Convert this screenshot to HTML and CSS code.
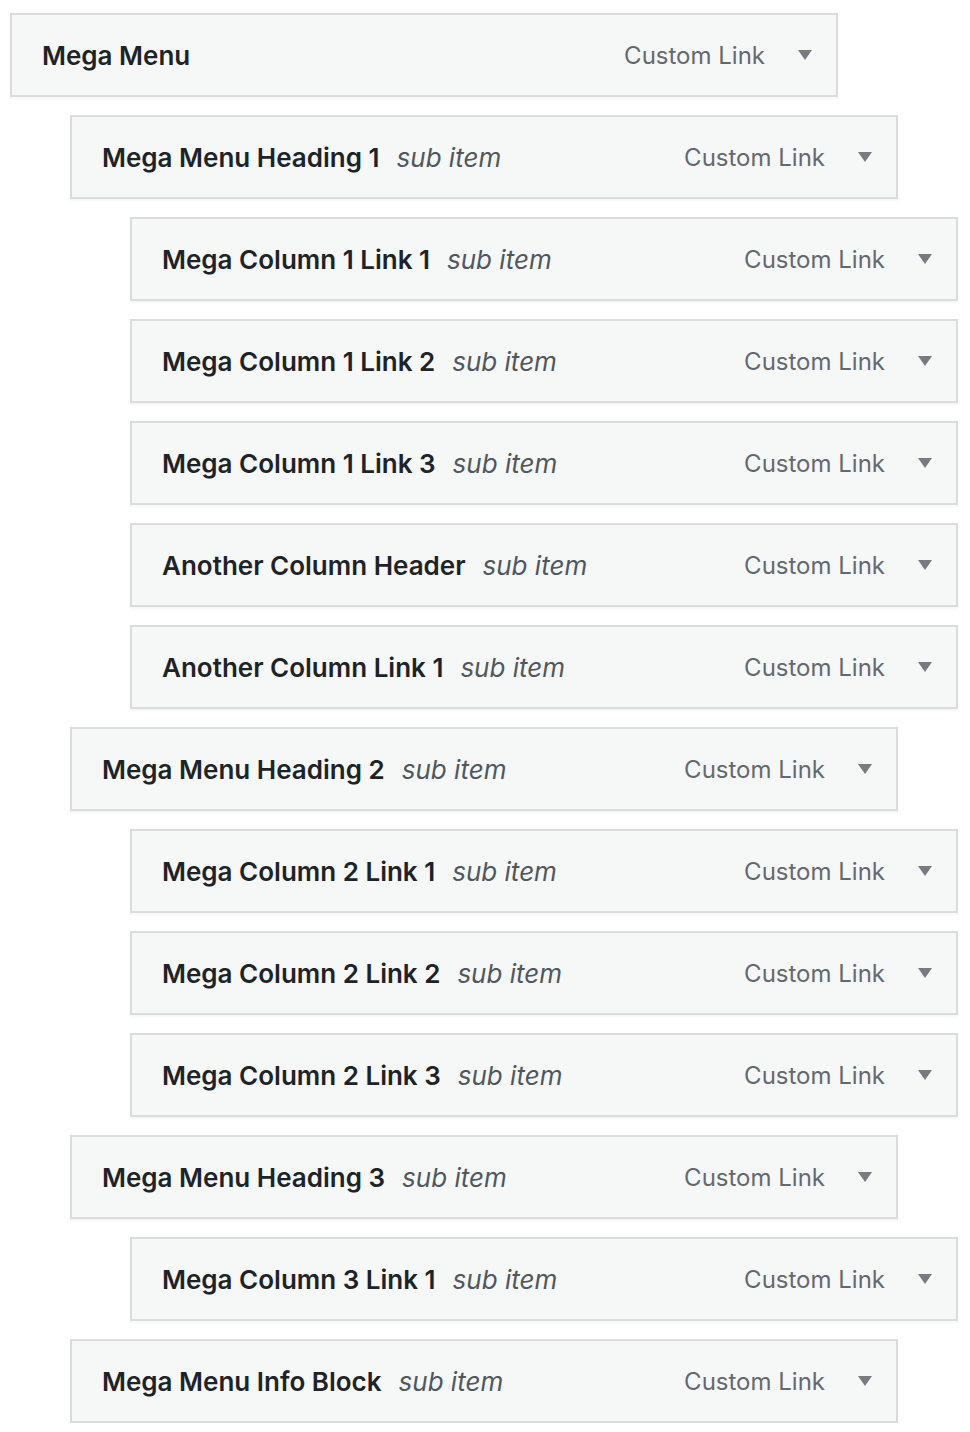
FILE: index.html
```html
<!DOCTYPE html>
<html lang="en">
<head>
<meta charset="utf-8">
<title>Menu structure</title>
<link rel="stylesheet" href="styles.css">
</head>
<body>
<ul class="menu">
  <li class="item depth-0"><div class="handle"><span class="title">Mega Menu</span><span class="controls"><span class="type">Custom Link</span><span class="toggle"></span></span></div></li>
  <li class="item depth-1"><div class="handle"><span class="title">Mega Menu Heading 1<span class="sub">sub item</span></span><span class="controls"><span class="type">Custom Link</span><span class="toggle"></span></span></div></li>
  <li class="item depth-2"><div class="handle"><span class="title">Mega Column 1 Link 1<span class="sub">sub item</span></span><span class="controls"><span class="type">Custom Link</span><span class="toggle"></span></span></div></li>
  <li class="item depth-2"><div class="handle"><span class="title">Mega Column 1 Link 2<span class="sub">sub item</span></span><span class="controls"><span class="type">Custom Link</span><span class="toggle"></span></span></div></li>
  <li class="item depth-2"><div class="handle"><span class="title">Mega Column 1 Link 3<span class="sub">sub item</span></span><span class="controls"><span class="type">Custom Link</span><span class="toggle"></span></span></div></li>
  <li class="item depth-2"><div class="handle"><span class="title">Another Column Header<span class="sub">sub item</span></span><span class="controls"><span class="type">Custom Link</span><span class="toggle"></span></span></div></li>
  <li class="item depth-2"><div class="handle"><span class="title">Another Column Link 1<span class="sub">sub item</span></span><span class="controls"><span class="type">Custom Link</span><span class="toggle"></span></span></div></li>
  <li class="item depth-1"><div class="handle"><span class="title">Mega Menu Heading 2<span class="sub">sub item</span></span><span class="controls"><span class="type">Custom Link</span><span class="toggle"></span></span></div></li>
  <li class="item depth-2"><div class="handle"><span class="title">Mega Column 2 Link 1<span class="sub">sub item</span></span><span class="controls"><span class="type">Custom Link</span><span class="toggle"></span></span></div></li>
  <li class="item depth-2"><div class="handle"><span class="title">Mega Column 2 Link 2<span class="sub">sub item</span></span><span class="controls"><span class="type">Custom Link</span><span class="toggle"></span></span></div></li>
  <li class="item depth-2"><div class="handle"><span class="title">Mega Column 2 Link 3<span class="sub">sub item</span></span><span class="controls"><span class="type">Custom Link</span><span class="toggle"></span></span></div></li>
  <li class="item depth-1"><div class="handle"><span class="title">Mega Menu Heading 3<span class="sub">sub item</span></span><span class="controls"><span class="type">Custom Link</span><span class="toggle"></span></span></div></li>
  <li class="item depth-2"><div class="handle"><span class="title">Mega Column 3 Link 1<span class="sub">sub item</span></span><span class="controls"><span class="type">Custom Link</span><span class="toggle"></span></span></div></li>
  <li class="item depth-1"><div class="handle"><span class="title">Mega Menu Info Block<span class="sub">sub item</span></span><span class="controls"><span class="type">Custom Link</span><span class="toggle"></span></span></div></li>
</ul>
</body>
</html>
```

FILE: styles.css
```css
html, body {
  margin: 0;
  padding: 0;
  background: #ffffff;
}

body {
  font-family: Inter, "Noto Sans", "Liberation Sans", sans-serif;
  color: #1d2327;
}

.menu {
  list-style: none;
  margin: 0;
  padding: 13px 0 0 10px;
  display: flex;
  flex-direction: column;
  gap: 18px;
}

.item {
  width: 828px;
}

.depth-1 { margin-left: 60px; }
.depth-2 { margin-left: 120px; }

.handle {
  box-sizing: border-box;
  width: 828px;
  display: flex;
  align-items: center;
  justify-content: space-between;
  padding: 21px 24px 19px 30px;
  border: 2px solid #dcdcde;
  background: #f6f7f7;
  box-shadow: 0 2px 2px rgba(0, 0, 0, 0.04);
  line-height: 40px;
}

.title {
  font-size: 26px;
  font-weight: 600;
  color: #1d2327;
  white-space: nowrap;
}

.sub {
  margin-left: 17px;
  font-style: italic;
  font-weight: 400;
  color: #50575e;
}

.controls {
  display: flex;
  align-items: center;
  gap: 33px;
}

.type {
  font-size: 24px;
  color: #646970;
}

.toggle {
  width: 0;
  height: 0;
  margin-bottom: 2px;
  border-left: 7.5px solid transparent;
  border-right: 7.5px solid transparent;
  border-top: 10px solid #787c82;
}
```
